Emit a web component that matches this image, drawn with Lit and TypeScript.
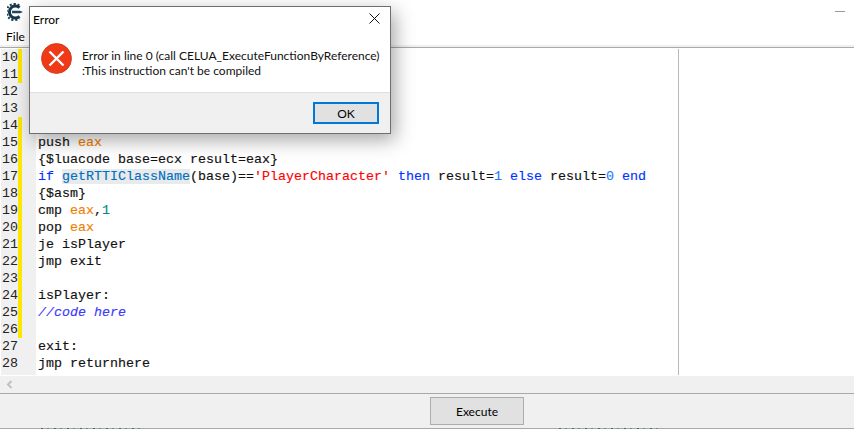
import { LitElement, html, css } from "lit";
import { customElement } from "lit/decorators.js";

type Seg = [string, string?];
const lines: { n: number; mark: boolean; segs: Seg[] }[] = [
  { n: 10, mark: true, segs: [] },
  { n: 11, mark: true, segs: [] },
  { n: 12, mark: false, segs: [] },
  { n: 13, mark: false, segs: [] },
  { n: 14, mark: true, segs: [] },
  { n: 15, mark: true, segs: [["push "], ["eax", "reg"]] },
  { n: 16, mark: true, segs: [["{$luacode base=ecx result=eax}"]] },
  {
    n: 17,
    mark: true,
    segs: [
      ["if", "kw"],
      [" "],
      ["getRTTIClassName", "fn"],
      ["(base)=="],
      ["'PlayerCharacter'", "str"],
      [" "],
      ["then", "kw"],
      [" result="],
      ["1", "v"],
      [" "],
      ["else", "kw"],
      [" result="],
      ["0", "v"],
      [" "],
      ["end", "kw"],
    ],
  },
  { n: 18, mark: true, segs: [["{$asm}"]] },
  { n: 19, mark: true, segs: [["cmp "], ["eax", "reg"], [","], ["1", "teal"]] },
  { n: 20, mark: true, segs: [["pop "], ["eax", "reg"]] },
  { n: 21, mark: true, segs: [["je isPlayer"]] },
  { n: 22, mark: true, segs: [["jmp exit"]] },
  { n: 23, mark: true, segs: [] },
  { n: 24, mark: true, segs: [["isPlayer:"]] },
  { n: 25, mark: true, segs: [["//code here", "cm"]] },
  { n: 26, mark: true, segs: [] },
  { n: 27, mark: false, segs: [["exit:"]] },
  { n: 28, mark: false, segs: [["jmp returnhere"]] },
];

@customElement("app-root")
export class AppRoot extends LitElement {
  static styles = css`
    :host {
      display: block;
      width: 854px;
      height: 429px;
      position: relative;
      overflow: hidden;
      background: #fff;
      font-family: "Lato", "Noto Sans", sans-serif;
      font-size: 12px;
      color: #000;
    }
    .window {
      display: flex;
      flex-direction: column;
      height: 429px;
    }
    .titlebar {
      height: 26px;
      flex: none;
      display: flex;
      justify-content: space-between;
      background: #fff;
      padding: 3px 9px 0 7px;
      box-sizing: border-box;
    }
    .logo {
      width: 17px;
      height: 18px;
    }
    .min {
      width: 10px;
      height: 1px;
      background: #9a9a9a;
      margin-top: 8px;
    }
    .menu {
      height: 19px;
      flex: none;
      padding-left: 6px;
      line-height: 22px;
      background: #fff;
    }
    .rule {
      flex: none;
      height: 2px;
      background: #f0f0f0;
    }
    .rule2 {
      flex: none;
      height: 1px;
      background: #a9a9a9;
    }
    .editor-wrap {
      flex: none;
      height: 328px;
      display: flex;
      padding: 1px 0;
      box-sizing: border-box;
      overflow: hidden;
    }
    .editor {
      width: 678px;
      flex: none;
      padding-left: 1px;
      box-sizing: border-box;
      background: #fff;
      display: flex;
      flex-direction: column;
    }
    .side {
      flex: 1;
      border-left: 1px solid #b9b9b9;
    }
    .row {
      height: 17px;
      flex: none;
      display: flex;
      font-family: "Liberation Mono", monospace;
      font-size: 13.33px;
      line-height: 17px;
      white-space: pre;
    }
    .filler {
      flex: 1;
      width: 35px;
      background: #f0f0f0;
    }
    .num {
      width: 35px;
      flex: none;
      background: #f0f0f0;
      display: flex;
      color: #222;
    }
    .num span {
      width: 17px;
      padding-left: 1px;
      box-sizing: border-box;
      overflow: visible;
    }
    .mark {
      width: 4px;
      flex: none;
    }
    .mark.on {
      background: #ffe600;
    }
    .code {
      padding-left: 2px;
      color: #111;
      -webkit-text-stroke: 0.15px currentColor;
    }
    .reg {
      color: #f08000;
    }
    .kw {
      color: #0033ff;
    }
    .fn {
      color: #0070c0;
      background: #e8eaec;
    }
    .str {
      color: #ff0000;
    }
    .v {
      color: #1e7fff;
    }
    .teal {
      color: #008b8b;
    }
    .cm {
      color: #3b3bff;
      font-style: italic;
    }
    .hscroll {
      flex: none;
      height: 17px;
      background: #f0f0f0;
      display: flex;
      align-items: center;
      padding-left: 6px;
      box-sizing: border-box;
    }
    .hscroll svg {
      width: 7px;
      height: 9px;
    }
    .bottom-rule {
      flex: none;
      height: 1px;
      background: #a9a9a9;
    }
    .actions {
      flex: none;
      height: 34px;
      background: #f0f0f0;
      display: flex;
      justify-content: center;
      align-items: flex-start;
      padding: 3px 0 0 100px;
      box-sizing: border-box;
    }
    .exec {
      width: 94px;
      height: 28px;
      border: 1px solid #adadad;
      background: #e1e1e1;
      box-sizing: border-box;
      font: inherit;
      color: #000;
      padding: 0;
    }
    .tail {
      flex: none;
      height: 1px;
      background: #a9a9a9;
      display: flex;
      padding-left: 41px;
      gap: 414px;
    }
    .tail i {
      width: 104px;
      background: repeating-linear-gradient(
        90deg,
        #2f7a55 0 2px,
        #a9a9a9 2px 6px,
        #6c8f7c 6px 8px,
        #a9a9a9 8px 13px
      );
    }
    .dialog {
      position: absolute;
      left: 29px;
      top: 6px;
      width: 362px;
      height: 128px;
      box-sizing: border-box;
      border: 1px solid #6f6f6f;
      background: #fff;
      box-shadow: 4px 6px 18px rgba(0, 0, 0, 0.35);
      display: flex;
      flex-direction: column;
    }
    .d-title {
      flex: none;
      height: 30px;
      display: flex;
      justify-content: space-between;
      padding: 4px 10px 0 3px;
      box-sizing: border-box;
      line-height: 18px;
    }
    .d-title svg {
      width: 11px;
      height: 11px;
      margin-top: 2px;
    }
    .d-body {
      flex: 1;
      display: flex;
      gap: 10px;
      padding: 5px 0 0 11px;
      min-height: 0;
    }
    .d-icon {
      width: 31px;
      height: 31px;
      flex: none;
      margin-top: 1px;
    }
    .d-text {
      line-height: 15px;
      padding-top: 6px;
      white-space: nowrap;
      color: #111;
    }
    .d-foot {
      flex: none;
      height: 41px;
      background: #f0f0f0;
      border-top: 1px solid #dfdfdf;
      box-sizing: border-box;
      display: flex;
      justify-content: flex-end;
      padding: 9px 11px 0 0;
    }
    .ok {
      width: 66px;
      height: 22px;
      border: 2px solid #0078d7;
      background: #e1e1e1;
      box-sizing: border-box;
      font: inherit;
      color: #000;
      padding: 0;
    }
  `;

  render() {
    return html`
      <div class="window">
        <div class="titlebar">
          <svg class="logo" viewBox="0 0 17 18">
            <path
              d="M12.5 4.6 A6 6 0 1 0 12.5 13.4"
              fill="none"
              stroke="#16384f"
              stroke-width="3"
            />
            <path
              d="M12.2 2.6 A8 8 0 1 0 12.2 15.4"
              fill="none"
              stroke="#16384f"
              stroke-width="2.2"
              stroke-dasharray="2 1.8"
            />
            <path d="M5 7.8 H13 L16 9 L13 10.2 H5 Z" fill="#1b4a6b" />
          </svg>
          <div class="min"></div>
        </div>
        <div class="menu">File</div>
        <div class="rule"></div>
        <div class="rule2"></div>
        <div class="editor-wrap">
          <div class="editor">
            ${lines.map(
              (l) => html`<div class="row">
                <div class="num">
                  <span>${l.n}</span><i class="mark ${l.mark ? "on" : ""}"></i>
                </div>
                <div class="code">${l.segs.map(([t, c]) =>
                  c ? html`<span class="${c}">${t}</span>` : t
                )}</div>
              </div>`
            )}
            <div class="filler"></div>
          </div>
          <div class="side"></div>
        </div>
        <div class="hscroll">
          <svg viewBox="0 0 7 9">
            <path d="M5.5 1 L2 4.5 L5.5 8" fill="none" stroke="#c0c0c0" stroke-width="2" />
          </svg>
        </div>
        <div class="bottom-rule"></div>
        <div class="actions"><button class="exec">Execute</button></div>
        <div class="tail"><i></i><i></i></div>
      </div>
      <div class="dialog">
        <div class="d-title">
          <span>Error</span>
          <svg viewBox="0 0 11 11">
            <path d="M0.5 0.5 L10.5 10.5 M10.5 0.5 L0.5 10.5" stroke="#111" stroke-width="1" fill="none" />
          </svg>
        </div>
        <div class="d-body">
          <svg class="d-icon" viewBox="0 0 31 31">
            <circle cx="15.5" cy="15.5" r="15" fill="#f03a17" stroke="#c8351a" stroke-width="0.8" />
            <path d="M8.5 8.5 L22.5 22.5 M22.5 8.5 L8.5 22.5" stroke="#fff" stroke-width="2.4" fill="none" />
          </svg>
          <div class="d-text">
            Error in line 0 (call CELUA_ExecuteFunctionByReference)<br />:This instruction can't be compiled
          </div>
        </div>
        <div class="d-foot"><button class="ok">OK</button></div>
      </div>
    `;
  }
}
